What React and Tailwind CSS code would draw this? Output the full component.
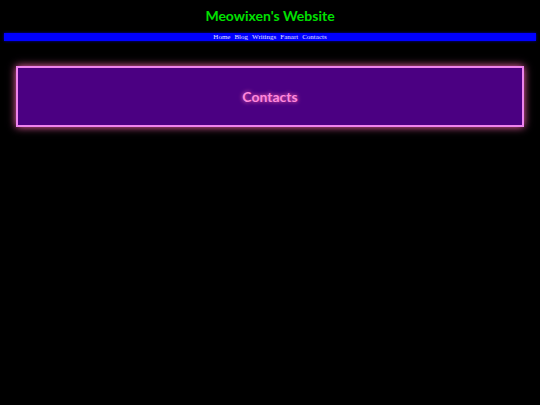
import React from "react";

const links = ["Home", "Blog", "Writings", "Fanart", "Contacts"];

const App = () => {
    return (
        <div className="min-h-[405px] bg-black px-1 pt-[8px]">
            {/* Title */}
            <h1 className="text-center text-[14px] leading-[16px] font-bold text-[#00e000] font-['Lato',sans-serif]">
                Meowixen's Website
            </h1>

            {/* Nav bar */}
            <nav className="mt-[9px] h-[8px] bg-[#0000ff] shadow-[0_0_3px_#0000aa] flex items-center justify-center gap-[4px] font-['Liberation_Serif',serif] text-[7px] leading-[8px] text-[#e0e0ff]">
                {links.map((l) => (
                    <a key={l} href="#">{l}</a>
                ))}
            </nav>

            {/* Contacts box */}
            <div className="mx-3 mt-[25px] h-[61px] bg-[#4b0082] border-2 border-[#ee82ee] shadow-[0_0_8px_#ff69b4] flex items-center justify-center">
                <h2 className="text-[14px] font-bold text-[#ff88dd] font-['Lato',sans-serif] [text-shadow:0_0_4px_#ff69b4]">
                    Contacts
                </h2>
            </div>
        </div>
    );
};

export default App;
